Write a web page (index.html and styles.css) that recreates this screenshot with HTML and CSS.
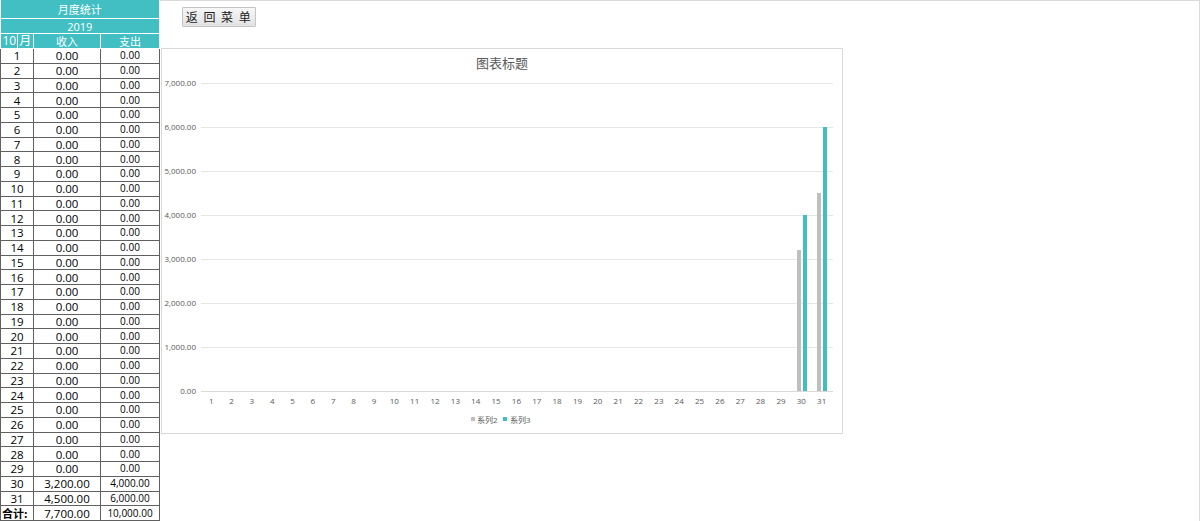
FILE: index.html
```html
<!DOCTYPE html>
<html lang="zh">
<head>
<meta charset="utf-8">
<title>月度统计</title>
<link rel="stylesheet" href="styles.css">
</head>
<body>
<div class="page">
  <table class="stats">
    <colgroup><col class="c-day"><col class="c-in"><col class="c-out"></colgroup>
    <thead>
      <tr class="h1"><th colspan="3">月度统计</th></tr>
      <tr class="h2"><th colspan="3">2019</th></tr>
      <tr class="h3"><th class="mon"><span class="m-num">10</span><span class="m-txt">月</span></th><th>收入</th><th>支出</th></tr>
    </thead>
    <tbody id="rows">
    </tbody>
  </table>
  <div class="pane">
    <button class="back">返 回 菜 单</button>
    <div class="chart">
      <svg id="chart" width="680" height="384" viewBox="0 0 680 384" xmlns="http://www.w3.org/2000/svg">
        <text class="title" x="340" y="19" text-anchor="middle">图表标题</text>
        <g id="grid"></g>
        <g id="xlabels"></g>
        <rect x="635" y="201" width="4" height="141" fill="#bfbfbf"/>
        <rect x="641" y="166" width="4" height="176" fill="#3fbfc1"/>
        <rect x="655" y="144" width="4" height="198" fill="#bfbfbf"/>
        <rect x="661" y="78" width="4" height="264" fill="#3fbfc1"/>
        <rect x="309" y="368" width="4" height="4" fill="#bfbfbf"/>
        <text class="lbl" x="315" y="374">系列2</text>
        <rect x="341" y="368" width="4" height="4" fill="#3fbfc1"/>
        <text class="lbl" x="348" y="374">系列3</text>
      </svg>
    </div>
  </div>
</div>
<script>
(function(){
  var tb = document.getElementById('rows');
  var html = '';
  for (var i = 1; i <= 31; i++) {
    var a = '0.00', b = '0.00';
    if (i === 30) { a = '3,200.00'; b = '4,000.00'; }
    if (i === 31) { a = '4,500.00'; b = '6,000.00'; }
    html += '<tr><td class="day">' + i + '</td><td class="in">' + a + '</td><td class="out">' + b + '</td></tr>';
  }
  html += '<tr class="total"><td class="day tl">合计:</td><td class="in">7,700.00</td><td class="out">10,000.00</td></tr>';
  tb.innerHTML = html;

  var ns = 'http://www.w3.org/2000/svg';
  var grid = document.getElementById('grid');
  var labels = ['7,000.00','6,000.00','5,000.00','4,000.00','3,000.00','2,000.00','1,000.00','0.00'];
  for (var k = 0; k < 8; k++) {
    var y = 34 + k * 44;
    var l = document.createElementNS(ns, 'line');
    l.setAttribute('x1', 39); l.setAttribute('x2', 671);
    l.setAttribute('y1', y + 0.5); l.setAttribute('y2', y + 0.5);
    l.setAttribute('stroke', k === 7 ? '#d9d9d9' : '#e6e6e6');
    l.setAttribute('stroke-width', 1);
    grid.appendChild(l);
    var t = document.createElementNS(ns, 'text');
    t.setAttribute('x', 34); t.setAttribute('y', y + 3);
    t.setAttribute('text-anchor', 'end');
    t.setAttribute('class', 'lbl');
    t.textContent = labels[k];
    grid.appendChild(t);
  }
  var xl = document.getElementById('xlabels');
  for (var d = 1; d <= 31; d++) {
    var tx = document.createElementNS(ns, 'text');
    tx.setAttribute('x', (39 + (d - 0.5) * 20.35).toFixed(1));
    tx.setAttribute('y', 355);
    tx.setAttribute('text-anchor', 'middle');
    tx.setAttribute('class', 'lbl');
    tx.textContent = d;
    xl.appendChild(tx);
  }
})();
</script>
</body>
</html>
```

FILE: styles.css
```css
html, body {
  margin: 0;
  padding: 0;
  background: #ffffff;
}
body {
  font-family: "Open Sans", "Noto Sans CJK SC", sans-serif;
  overflow: hidden;
}
.page {
  display: flex;
  width: 1200px;
  height: 521px;
  box-sizing: border-box;
}
.stats {
  border-collapse: collapse;
  table-layout: fixed;
  width: 159px;
  flex: none;
  align-self: flex-start;
}
.c-day { width: 33px; }
.c-in { width: 67px; }
.c-out { width: 59px; }
.stats th {
  background: #41bfc3;
  color: #ffffff;
  font-weight: normal;
  font-size: 11px;
  font-family: "Open Sans", "Noto Sans CJK SC", sans-serif;
  border: 1px solid #ffffff;
  padding: 0;
  line-height: 1;
  text-align: center;
  vertical-align: middle;
}
.stats .h1 th { height: 18px; border-top: none; border-left: none; }
.stats .h2 th { height: 14px; border-left: none; font-size: 11px; }
.stats .h3 th { height: 14px; }
.stats .h3 th:first-child { border-left: none; }
.stats .mon {
  padding: 0;
  font-size: 12px;
}
.mon .m-num, .mon .m-txt {
  display: inline-block;
  vertical-align: middle;
}
.mon .m-num {
  width: 16px;
  text-align: center;
  border-right: 1px solid #ffffff;
  height: 14px;
  line-height: 14px;
}
.mon .m-txt {
  width: 14px;
  text-align: center;
  height: 14px;
  line-height: 14px;
}
.stats td {
  border: 1px solid #606060;
  height: 13.75px;
  padding: 0;
  line-height: 13px;
  text-align: center;
  vertical-align: middle;
  color: #000000;
  font-size: 11.5px;
  overflow: hidden;
  white-space: nowrap;
}
.stats td.out { font-size: 10px; }
.stats td.tl {
  text-align: left;
  font-weight: bold;
  padding-left: 1px;
  font-size: 11px;
  font-family: "Noto Sans CJK SC", sans-serif;
}
.pane {
  flex: 1;
  border-top: 1px solid #dadada;
  border-right: 1px solid #dadada;
  display: flex;
  flex-direction: column;
  align-items: flex-start;
}
.back {
  margin: 6px 0 0 22px;
  width: 74px;
  height: 20px;
  padding: 0;
  border: 1px solid #c4c4c4;
  border-radius: 1px;
  background: linear-gradient(#f7f7f7, #e2e2e2);
  font-family: "Noto Sans CJK SC", sans-serif;
  font-size: 12px;
  line-height: 18px;
  color: #222222;
  letter-spacing: 1.5px;
}
.chart {
  margin: 21px 0 0 1px;
  border: 1px solid #d9d9d9;
  width: 680px;
  height: 384px;
}
.chart svg { display: block; }
.title {
  font-family: "Noto Sans CJK SC", sans-serif;
  font-size: 13px;
  fill: #595959;
}
.lbl {
  font-family: "Open Sans", "Noto Sans CJK SC", sans-serif;
  font-size: 8px;
  fill: #595959;
}
```
